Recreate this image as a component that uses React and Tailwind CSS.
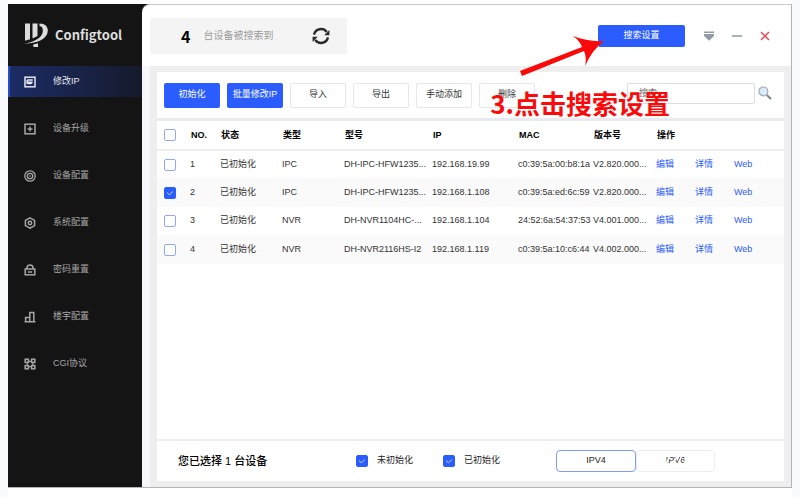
import React, { useState } from "react";

const FONT = "font-['Liberation_Sans','Noto_Sans_CJK_SC',sans-serif]";

function Stroke({ children, className = "size-3" }) {
  return (
    <svg viewBox="0 0 12 12" fill="none" stroke="currentColor" strokeWidth="1.5" className={className} aria-hidden="true">
      {children}
    </svg>
  );
}

const MENU = [
  {
    label: "修改IP",
    icon: (
      <>
        <rect x="1" y="1.2" width="10" height="9.6" />
        <path d="M3.2 4h5.6M3.2 8V4" />
        <path d="M4 5.5h4.6v1.4L7 8.3H4z" fill="currentColor" stroke="none" />
      </>
    ),
  },
  {
    label: "设备升级",
    icon: (
      <>
        <rect x="1" y="1.2" width="10" height="9.6" />
        <path d="M6 3.6v4.8M3.6 6h4.8" />
      </>
    ),
  },
  {
    label: "设备配置",
    icon: (
      <>
        <circle cx="6" cy="6" r="5.2" strokeWidth="1.3" />
        <circle cx="6" cy="6" r="2.7" strokeWidth="1.3" />
        <circle cx="6" cy="6" r="0.8" fill="currentColor" stroke="none" />
      </>
    ),
  },
  {
    label: "系统配置",
    icon: (
      <>
        <path d="M6 .8 10.6 3.4v5.2L6 11.2 1.4 8.6V3.4z" />
        <circle cx="6" cy="6" r="1.7" />
      </>
    ),
  },
  {
    label: "密码重置",
    icon: (
      <>
        <rect x="1.2" y="5" width="9.6" height="5.8" />
        <path d="M3 5V4a3 3 0 0 1 6 0v1M3.8 8h4.4" />
      </>
    ),
  },
  {
    label: "楼宇配置",
    icon: <path d="M.6 10.8h10.8M1.6 10.8V6.4h3.6M5.8 10.8V1.4h4v9.4" />,
  },
  {
    label: "CGI协议",
    icon: (
      <>
        <rect x="1.2" y="1.2" width="3.2" height="3.2" />
        <rect x="7.6" y="1.2" width="3.2" height="3.2" />
        <rect x="1.2" y="7.6" width="3.2" height="3.2" />
        <rect x="7.6" y="7.6" width="3.2" height="3.2" />
        <path d="M4.200 3.400h3.600M4.200 8.600h3.600M3.200 4.400v3.400M8.800 4.400v3.400" strokeWidth="1.200" />
      </>
    ),
  },
];

const ROWS = [
  ["1", "已初始化", "IPC", "DH-IPC-HFW1235...", "192.168.19.99", "c0:39:5a:00:b8:1a", "V2.820.000..."],
  ["2", "已初始化", "IPC", "DH-IPC-HFW1235...", "192.168.1.108", "c0:39:5a:ed:6c:59", "V2.820.000..."],
  ["3", "已初始化", "NVR", "DH-NVR1104HC-...", "192.168.1.104", "24:52:6a:54:37:53", "V4.001.000..."],
  ["4", "已初始化", "NVR", "DH-NVR2116HS-I2", "192.168.1.119", "c0:39:5a:10:c6:44", "V4.002.000..."],
];

function Check({ on = false, id, label }) {
  const [checked, setChecked] = useState(on);
  return (
    <span className="relative block size-3 shrink-0">
      <input
        id={id}
        type="checkbox"
        aria-label={label}
        checked={checked}
        onChange={(e) => setChecked(e.target.checked)}
        className="block size-3 appearance-none rounded-xs border border-[#93a9f2] bg-white checked:border-[#2a5cff] checked:bg-[#2a5cff]"
      />
      {checked && (
        <svg viewBox="0 0 12 12" className="pointer-events-none absolute inset-0 size-3" fill="none" stroke="#c5d3ff" aria-hidden="true">
          <path d="m3 5.6 2.3 2.2L9 4.4" />
        </svg>
      )}
    </span>
  );
}

function Sidebar() {
  return (
    <aside className="w-[134px] shrink-0 bg-[#141414]">
      <div className="flex h-[62px] items-center gap-[7px] pl-4">
        <svg viewBox="0 0 24 24" className="size-6 text-[#dcdcdc]" fill="currentColor" aria-hidden="true">
          <path d="M1 .5h5v15.800l-5 1.500zM8.500 .5h5v12.500l-5 2.500z" />
          <path d="M15.500 .5C21 .5 24 3.500 23.800 8 23.400 15.500 14 20.600 0 20.400c9-1 18.400-5.400 18.800-12C19 5 18 3.300 15.500 3z" />
          <path d="M9.300 21.500 14 20.300V24H9.300z" />
        </svg>
        <span className="font-['Noto_Sans_CJK_SC',sans-serif] text-[13px] font-bold text-[#dedede]">Configtool</span>
      </div>
      <nav className="flex flex-col gap-4">
        {MENU.map((item, i) => (
          <a
            key={item.label}
            href="#"
            className={
              i === 0
                ? "flex h-[31px] items-center gap-[17px] border-l-2 border-[#2a4fc4] bg-linear-to-r from-[#1c2c66] to-[#151a2c] pl-[14px] text-[9px] text-[#e6e6ee]"
                : "flex h-[31px] items-center gap-[17px] pl-4 text-[9px] text-[#a6a6a6]"
            }
          >
            <Stroke>{item.icon}</Stroke>
            <span>{item.label}</span>
          </a>
        ))}
      </nav>
    </aside>
  );
}

function Header() {
  return (
    <header className="flex h-[61px] shrink-0 items-center pr-5 pl-2">
      <div className="flex h-9 w-[197px] items-center bg-[#f4f4f4] pr-4 pl-[31px]">
        <span className="font-['Noto_Sans_CJK_SC',sans-serif] text-base font-bold text-black">4</span>
        <span className="ml-[13px] text-[10px] text-[#9c9c9c]">台设备被搜索到</span>
        <button type="button" aria-label="刷新" className="ml-auto">
          <svg viewBox="0 0 20 20" className="size-5" fill="none" stroke="#2b2b2b" strokeWidth="2.4" aria-hidden="true">
            <path d="M3 8.600A7.200 7.200 0 0 1 15.800 6M17 11.400A7.200 7.200 0 0 1 4.200 14" />
            <path d="M18.400 4v5.200h-5.200zM1.600 16V10.800h5.200z" fill="#2b2b2b" stroke="none" />
          </svg>
        </button>
      </div>
      <button type="button" className="ml-auto h-[22px] w-[87px] rounded-xs bg-[#2a5cff] text-[9px] text-white">
        搜索设置
      </button>
      <div className="ml-[18px] flex items-center gap-4">
        <button type="button" aria-label="菜单">
          <svg viewBox="0 0 12 12" className="size-3" fill="#939ba6" aria-hidden="true">
            <path d="M1 1.400h10v1.600H1zM1 4h10v2L6 10.800 1 6z" />
          </svg>
        </button>
        <button type="button" aria-label="最小化">
          <svg viewBox="0 0 12 12" className="size-3" aria-hidden="true">
            <path d="M.8 6h10.400" stroke="#a3abb5" strokeWidth="1.800" />
          </svg>
        </button>
        <button type="button" aria-label="关闭">
          <svg viewBox="0 0 12 12" className="size-3" aria-hidden="true">
            <path d="m2 2 8 8M10 2l-8 8" stroke="#e04a50" strokeWidth="1.500" />
          </svg>
        </button>
      </div>
    </header>
  );
}

function Toolbar() {
  return (
    <div className="flex h-[46px] shrink-0 items-center gap-[7px] bg-white pr-3 pl-[7px] text-[9px]">
      {["初始化", "批量修改IP", "导入", "导出", "手动添加", "删除"].map((label, i) => (
        <button
          key={label}
          type="button"
          className={
            i < 2
              ? "h-[25px] w-14 shrink-0 rounded-xs bg-[#2a5cff] whitespace-nowrap text-white"
              : "h-[25px] w-14 shrink-0 rounded-xs border border-[#e6e6ec] bg-white whitespace-nowrap text-[#333333]"
          }
        >
          {label}
        </button>
      ))}
      <div className="mb-1 ml-auto flex items-center gap-[3px]">
        <input
          type="text"
          aria-label="搜索"
          placeholder="搜索..."
          className="h-[21px] w-32 rounded-xs border border-[#dcdce4] bg-white px-[11px] text-[9px] placeholder:text-[#666666]"
        />
        <button type="button" aria-label="查找">
          <svg viewBox="0 0 14 14" className="size-[14px]" fill="none" aria-hidden="true">
            <path d="m8.800 9 4.200 4" stroke="#7d838c" strokeWidth="2" />
            <circle cx="5.400" cy="5.400" r="4.400" fill="#d9ecf8" stroke="#9eabb8" strokeWidth="1.200" />
          </svg>
        </button>
      </div>
    </div>
  );
}

function DeviceTable() {
  return (
    <div className="flex-1 bg-white">
      <table className="w-full table-fixed text-left text-[9px] whitespace-nowrap text-[#333333]">
        <colgroup>
          <col className="w-[33px]" />
          <col className="w-[30px]" />
          <col className="w-[62px]" />
          <col className="w-[62px]" />
          <col className="w-[88px]" />
          <col className="w-[86px]" />
          <col className="w-[75px]" />
          <col className="w-[63px]" />
          <col />
        </colgroup>
        <thead>
          <tr className="h-[29px] border-b-2 border-[#eeeeee] text-black">
            <th className="pl-[7px]">
              <Check label="全选" />
            </th>
            {["NO.", "状态", "类型", "型号", "IP", "MAC", "版本号", "操作"].map((h) => (
              <th key={h} className="p-0 pt-[2px] pl-px font-bold">
                {h}
              </th>
            ))}
          </tr>
        </thead>
        <tbody>
          {ROWS.map((r, i) => (
            <tr key={r[0]} className="h-[28px] even:h-[29px] even:bg-[#fafafa]">
              <td className="pl-[7px]">
                <Check on={i === 1} label={"选择设备 " + r[0]} />
              </td>
              {r.map((c, j) => (
                <td key={j} className="p-0">
                  {c}
                </td>
              ))}
              <td className="p-0">
                <div className="flex text-[#2a5cff]">
                  <a href="#" className="w-[39px]">编辑</a>
                  <a href="#" className="w-[39px]">详情</a>
                  <a href="#">Web</a>
                </div>
              </td>
            </tr>
          ))}
        </tbody>
      </table>
    </div>
  );
}

function Footer() {
  return (
    <footer className="flex h-10 shrink-0 items-center bg-white pr-[69px] pl-[21px] text-[9px] text-[#222222]">
      <p className="w-[178px] text-[11px] font-medium text-black">您已选择 1 台设备</p>
      <div className="flex items-center gap-[30px]">
        <div className="flex items-center gap-[9px]">
          <Check id="uninit" on />
          <label htmlFor="uninit">未初始化</label>
        </div>
        <div className="flex items-center gap-[9px]">
          <Check id="init" on />
          <label htmlFor="init">已初始化</label>
        </div>
      </div>
      <div className="ml-auto flex">
        <button type="button" className="h-[22px] w-20 rounded-sm border border-[#7f9cf5] bg-white">
          IPV4
        </button>
        <button type="button" className="relative h-[22px] w-[79px] rounded-sm border border-[#eeeef2] bg-white">
          IPV6
          <svg viewBox="0 0 24 12" className="absolute top-1 left-7 h-3 w-6" stroke="#ffffff" strokeWidth="1.500" aria-hidden="true">
            <path d="M0 10 6 0M6 12 11 3M11 12 17 1M17 12 23 1" />
          </svg>
        </button>
      </div>
    </footer>
  );
}

export default function App() {
  return (
    <div className={"flex min-h-screen bg-[#fafbff] px-2 " + FONT}>
      <div className="relative flex flex-1 flex-col bg-white pt-1 pb-[10px]">
        <div className="flex flex-1 border-r border-b border-[#b4b4b8] bg-[#141414]">
          <Sidebar />
          <main className="flex min-w-0 flex-1 flex-col rounded-tl-lg border-t border-[#c8c8c8] bg-white">
            <Header />
            <div className="flex flex-1 bg-[#f7f7fb] pl-2">
              <div className="flex min-w-0 flex-1 flex-col bg-[#eeeeee] px-[7px] py-[6px]">
                <Toolbar />
                <div className="h-[3px] bg-[#e9e9f0]" />
                <DeviceTable />
                <div className="h-[2px]" />
                <Footer />
              </div>
            </div>
          </main>
        </div>

        <div className="pointer-events-none absolute top-9 right-[122px] flex flex-col text-[#fa0a0a]">
          <svg viewBox="0 0 84 42" className="ml-[30px] h-[42px] w-[84px]" fill="currentColor" aria-hidden="true">
            <path d="M0 35 62 11Q60 5 53 0 68 6 84 5 72 14 65 30 67 22 64 15L2 40z" />
          </svg>
          <p className="mt-[5px] font-['Noto_Sans_CJK_SC',sans-serif] text-[26px] leading-10 font-bold whitespace-nowrap">
            3.点击搜索设置
          </p>
        </div>
      </div>
    </div>
  );
}
